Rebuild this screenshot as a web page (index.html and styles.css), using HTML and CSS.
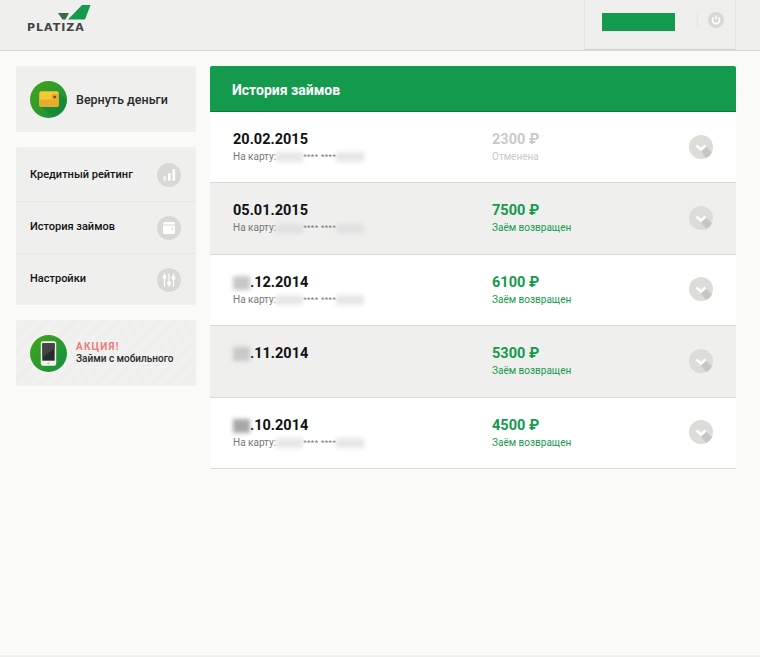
FILE: index.html
```html
<!DOCTYPE html>
<html lang="ru">
  <head>
    <meta charset="UTF-8" />
    <title>История займов</title>
    <link rel="stylesheet" href="styles.css">
  </head>
  <body>
    <header class="top">
      <div class="logo">
        <svg class="logo-mark" width="34" height="16" viewBox="0 0 34 16">
          <path d="M0 8h11l-3.500 6.500h-3z" fill="#3d6b4a" />
          <path d="M24 0h8.500l-5.500 14.500h-17z" fill="#149a4c" />
        </svg>
        <span class="logo-text">PLATIZA</span>
      </div>
      <div class="user">
        <div class="user-name"></div>
        <div class="user-sep"></div>
        <svg class="power" width="16" height="16" viewBox="0 0 16 16">
          <circle cx="8" cy="8" r="8" fill="#d8d9d5" />
          <path d="M5.500 5.500a3.600 3.600 0 1 0 5 0" fill="none" stroke="#fff" stroke-width="1.600" />
          <path d="M8 3.500v4" stroke="#fff" stroke-width="1.600" />
        </svg>
      </div>
    </header>

    <div class="page">
      <aside class="side">
        <a class="promo-box">
          <span class="round-icon">
            <svg width="37" height="37" viewBox="0 0 36 36">
              <path d="M10 24l17-14 9 9v2a16 16 0 0 1-15 14z" fill="#0f7f38" opacity="0.5" />
              <rect x="9" y="10" width="19" height="15" rx="2" fill="#f6c737" />
              <rect x="9" y="18" width="19" height="7" rx="1.500" fill="#e8ac2c" />
              <rect x="21" y="13" width="7" height="5" rx="1" fill="#e0a72c" />
              <circle cx="24" cy="15.500" r="1.200" fill="#5a4314" />
            </svg>
          </span>
          <span class="return-text">Вернуть деньги</span>
        </a>

        <nav class="menu">
          <a class="menu-row">
            <span>Кредитный рейтинг</span>
            <svg class="menu-icon" width="24" height="24" viewBox="0 0 24 24">
              <circle cx="12" cy="12" r="12" fill="#d8d9d5" />
              <rect x="6.500" y="13" width="2.600" height="5" rx="1.300" fill="#fff" opacity="0.7" />
              <rect x="11" y="10" width="2.600" height="8" rx="1.300" fill="#fff" />
              <rect x="15.500" y="6" width="2.600" height="12" rx="1.300" fill="#fff" />
            </svg>
          </a>
          <a class="menu-row">
            <span>История займов</span>
            <svg class="menu-icon" width="24" height="24" viewBox="0 0 24 24">
              <circle cx="12" cy="12" r="12" fill="#d8d9d5" />
              <rect x="6" y="6" width="12" height="12" rx="1.500" fill="#fff" />
              <rect x="6" y="8.500" width="12" height="1" fill="#d8d9d5" />
              <rect x="14.500" y="12" width="1.500" height="1.500" fill="#d8d9d5" />
            </svg>
          </a>
          <a class="menu-row">
            <span>Настройки</span>
            <svg class="menu-icon" width="24" height="24" viewBox="0 0 24 24">
              <circle cx="12" cy="12" r="12" fill="#d8d9d5" />
              <path d="M7.500 5.500v13M12 5.500v13M16.500 5.500v13" stroke="#fff" stroke-width="1.200" />
              <circle cx="7.500" cy="9" r="2" fill="#fff" />
              <circle cx="12" cy="15" r="2" fill="#fff" />
              <circle cx="16.500" cy="10" r="2" fill="#fff" />
            </svg>
          </a>
        </nav>

        <a class="promo-box striped">
          <span class="round-icon">
            <svg width="37" height="37" viewBox="0 0 36 36">
              <rect x="10.500" y="6" width="15" height="24" rx="2" fill="#f2f2f0" />
              <rect x="12" y="8" width="12" height="17" fill="#2b2b2b" />
              <path d="M12 8h12v5l-12 9z" fill="#444" />
              <circle cx="18" cy="27.500" r="1.200" fill="#cfcfcb" />
            </svg>
          </span>
          <span class="promo-text">
            <b>АКЦИЯ!</b>
            <span>Займи с мобильного</span>
          </span>
        </a>
      </aside>

      <main class="history">
        <h1 class="history-title">История займов</h1>

        <div class="loan">
          <div class="loan-info">
            <div class="loan-date">20.02.2015</div>
            <div class="loan-card">На карту:<i class="blur wide"></i><span class="stars">**** ****</span><i class="blur narrow"></i></div>
          </div>
          <div class="loan-sum off">
            <div class="sum">2300 ₽</div>
            <div class="status">Отменена</div>
          </div>
          <svg class="toggle" width="24" height="24" viewBox="0 0 24 24">
            <use href="#chevron" />
          </svg>
        </div>

        <div class="loan">
          <div class="loan-info">
            <div class="loan-date">05.01.2015</div>
            <div class="loan-card">На карту:<i class="blur wide"></i><span class="stars">**** ****</span><i class="blur narrow"></i></div>
          </div>
          <div class="loan-sum">
            <div class="sum">7500 ₽</div>
            <div class="status">Заём возвращен</div>
          </div>
          <svg class="toggle" width="24" height="24" viewBox="0 0 24 24">
            <use href="#chevron" />
          </svg>
        </div>

        <div class="loan">
          <div class="loan-info">
            <div class="loan-date"><i class="blur day"></i>.12.2014</div>
            <div class="loan-card">На карту:<i class="blur wide"></i><span class="stars">**** ****</span><i class="blur narrow"></i></div>
          </div>
          <div class="loan-sum">
            <div class="sum">6100 ₽</div>
            <div class="status">Заём возвращен</div>
          </div>
          <svg class="toggle" width="24" height="24" viewBox="0 0 24 24">
            <use href="#chevron" />
          </svg>
        </div>

        <div class="loan">
          <div class="loan-info">
            <div class="loan-date"><i class="blur day"></i>.11.2014</div>
            <div class="loan-card">&nbsp;</div>
          </div>
          <div class="loan-sum">
            <div class="sum">5300 ₽</div>
            <div class="status">Заём возвращен</div>
          </div>
          <svg class="toggle" width="24" height="24" viewBox="0 0 24 24">
            <use href="#chevron" />
          </svg>
        </div>

        <div class="loan">
          <div class="loan-info">
            <div class="loan-date"><i class="blur day dark"></i>.10.2014</div>
            <div class="loan-card">На карту:<i class="blur wide"></i><span class="stars">**** ****</span><i class="blur narrow"></i></div>
          </div>
          <div class="loan-sum">
            <div class="sum">4500 ₽</div>
            <div class="status">Заём возвращен</div>
          </div>
          <svg class="toggle" width="24" height="24" viewBox="0 0 24 24">
            <use href="#chevron" />
          </svg>
        </div>
      </main>
    </div>

    <footer class="bottom"></footer>

    <svg width="0" height="0" class="defs">
      <defs>
        <g id="chevron">
          <circle cx="12" cy="12" r="12" fill="#dcddd8" />
          <path d="M12 16.500l5-5 6 6a12 12 0 0 1-6 5.500z" fill="#c6c7c2" />
          <path d="M7.500 10.500l4.500 4 4.500-4" fill="none" stroke="#fff" stroke-width="2.800" />
        </g>
      </defs>
    </svg>
  </body>
</html>
```

FILE: styles.css
```css
* {
  padding: 0;
  margin: 0;
  box-sizing: border-box;
}
body {
  height: 657px;
  overflow: hidden;
  display: flex;
  flex-direction: column;
  background-color: #fafaf8;
  color: #1c1c1c;
  font-family: Roboto, "Liberation Sans", sans-serif;
}
.defs {
  position: absolute;
}

/* header */
.top {
  height: 51px;
  flex: none;
  display: flex;
  justify-content: space-between;
  padding: 0 24px 0 27px;
  background-color: #efefee;
  border-bottom: 1px solid #d9d9d6;
}
.logo {
  display: flex;
  flex-direction: column;
  padding-top: 5px;
}
.logo-mark {
  display: block;
  margin-left: 31px;
}
.logo-text {
  margin-top: 1px;
  font-family: "DejaVu Sans", sans-serif;
  font-size: 11px;
  line-height: 12px;
  font-weight: bold;
  letter-spacing: 1px;
  color: #444444;
}
.user {
  width: 152px;
  height: 50px;
  display: flex;
  align-items: flex-start;
  padding: 13px 0 0 17px;
  border-left: 1px solid #e6e6e4;
  border-right: 1px solid #e6e6e4;
  border-bottom: 1px solid #d2d2cf;
}
.user-name {
  width: 73px;
  height: 18px;
  background-color: #149a4c;
}
.user-sep {
  width: 1px;
  height: 15px;
  margin-left: 22px;
  background-color: #e6e6e4;
}
.power {
  margin: -1px 0 0 10px;
}

/* layout */
.page {
  flex: 1;
  display: grid;
  grid-template-columns: 180px 526px;
  gap: 14px;
  align-items: start;
  padding: 15px 0 0 16px;
}
.bottom {
  height: 2px;
  flex: none;
  background-color: #efefee;
}

/* sidebar */
.side {
  display: flex;
  flex-direction: column;
  gap: 15px;
}
.promo-box {
  height: 66px;
  display: flex;
  align-items: center;
  gap: 9px;
  padding-left: 14px;
  background-color: #efefee;
  border-radius: 2px;
}
.striped {
  background-image: repeating-linear-gradient(135deg, #efefee 0, #efefee 5px, #f1f1f0 5px, #f1f1f0 10px);
}
.round-icon {
  width: 37px;
  height: 37px;
  flex: none;
  overflow: hidden;
  border-radius: 50%;
  background: linear-gradient(135deg, #45a51a, #128f40);
}
.round-icon svg {
  display: block;
}
.return-text {
  font-size: 12.500px;
  font-weight: 500;
  color: #2a2a2a;
}
.menu {
  display: flex;
  flex-direction: column;
  background-color: #efefee;
  border-radius: 2px;
}
.menu-row {
  height: 52px;
  display: flex;
  align-items: center;
  justify-content: space-between;
  padding: 0 15px 0 14px;
  font-size: 11px;
  font-weight: 500;
  color: #111111;
  border-bottom: 1px solid #e6e6e4;
}
.menu-row:first-child {
  height: 55px;
  padding-top: 1px;
}
.menu-row:nth-child(2) > span {
  margin-bottom: 3px;
}
.menu-row:last-child {
  height: 51px;
  border-bottom: 0;
}
.menu-row:last-child > span {
  margin-bottom: 3px;
}
.promo-text {
  display: flex;
  flex-direction: column;
  font-size: 10px;
  line-height: 12px;
  font-weight: 500;
  color: #2a2a2a;
}
.promo-text b {
  color: #ee7b79;
  letter-spacing: 1.200px;
}

/* history */
.history-title {
  height: 46px;
  padding: 13px 22px 0;
  font-size: 14px;
  line-height: 22px;
  font-weight: bold;
  color: #ffffff;
  background-color: #149a4c;
  border-bottom: 1px solid #11743a;
  border-radius: 2px 2px 0 0;
}
.loan {
  height: 71.4px;
  display: grid;
  grid-template-columns: 259px 1fr 24px;
  align-items: start;
  padding: 18px 23px 0;
  background-color: #ffffff;
  border-bottom: 1px solid #d9d9d6;
}
.loan:nth-child(odd) {
  background-color: #efefee;
}
.loan-date,
.sum {
  font-size: 14.500px;
  line-height: 19px;
  font-weight: bold;
  color: #111111;
}
.sum {
  color: #149a4c;
}
.loan-card,
.status {
  font-size: 10px;
  line-height: 15px;
  color: #777777;
}
.status {
  color: #149a4c;
}
.off .sum,
.off .status {
  color: #c9c9c6;
}
.toggle {
  margin-top: 4.500px;
}
.stars {
  font-size: 8px;
  letter-spacing: 0.4px;
  vertical-align: 1px;
}
.blur {
  display: inline-block;
  height: 10px;
  vertical-align: middle;
  background-color: #dcdcdc;
  opacity: 0.7;
  filter: blur(2px);
}
.wide {
  width: 27px;
}
.narrow {
  width: 28px;
}
.day {
  width: 17px;
  height: 14px;
  background-color: #c8c8c8;
  opacity: 1;
}
.dark {
  background-color: #a8a8a8;
}
```
